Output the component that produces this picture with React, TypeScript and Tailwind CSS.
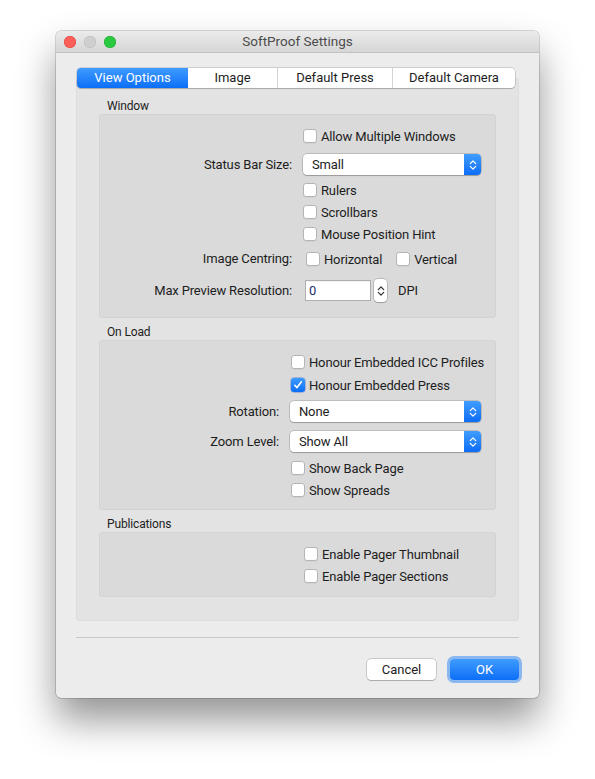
import React from "react";

const font = { fontFamily: "Roboto, 'Liberation Sans', sans-serif" };

function Box({ checked }: { checked?: boolean }) {
  if (checked) {
    return (
      <span className="flex h-[14px] w-[14px] shrink-0 items-center justify-center rounded-[3px] bg-gradient-to-b from-[#3d9bff] to-[#0a6df6] shadow-[0_0_0_0.5px_rgba(0,60,180,0.5)]">
        <svg width="10" height="10" viewBox="0 0 10 10">
          <path d="M1.8 5.3 L4 7.6 L8.4 1.8" fill="none" stroke="white" strokeWidth="1.6" strokeLinecap="round" strokeLinejoin="round" />
        </svg>
      </span>
    );
  }
  return (
    <span className="h-[14px] w-[14px] shrink-0 rounded-[3px] border border-[#b5b5b5] bg-white shadow-[0_1px_0_rgba(0,0,0,0.04)]" />
  );
}

function Check({ label, checked, className = "" }: { label: string; checked?: boolean; className?: string }) {
  return (
    <div className={`flex h-[22px] items-center ${className}`}>
      <Box checked={checked} />
      <span className="ml-[4px] whitespace-nowrap pt-[1px]">{label}</span>
    </div>
  );
}

function Arrows({ color }: { color: string }) {
  return (
    <svg width="8" height="12" viewBox="0 0 8 12">
      <path d="M1.3 4.6 L4 1.9 L6.7 4.6" fill="none" stroke={color} strokeWidth="1.3" strokeLinecap="round" strokeLinejoin="round" />
      <path d="M1.3 7.4 L4 10.1 L6.7 7.4" fill="none" stroke={color} strokeWidth="1.3" strokeLinecap="round" strokeLinejoin="round" />
    </svg>
  );
}

function Popup({ value, width }: { value: string; width: string }) {
  return (
    <div className={`flex h-[21px] ${width} rounded-[4px] bg-white shadow-[0_0_0_0.5px_rgba(0,0,0,0.28),0_1px_1px_rgba(0,0,0,0.18)]`}>
      <span className="flex flex-1 items-center pl-[9px]">{value}</span>
      <span className="flex w-[17px] items-center justify-center rounded-r-[4px] bg-gradient-to-b from-[#3f9dff] to-[#0b6cf5]">
        <Arrows color="white" />
      </span>
    </div>
  );
}

function Row({ label, labelW, children, className = "" }: { label?: string; labelW: string; children: React.ReactNode; className?: string }) {
  return (
    <div className={`flex items-center ${className}`}>
      <span className={`${labelW} shrink-0 text-right whitespace-nowrap`}>{label}</span>
      <div className="ml-[11px] flex items-center">{children}</div>
    </div>
  );
}

function Group({ title, children, className = "" }: { title: string; children: React.ReactNode; className?: string }) {
  return (
    <div className={`flex flex-col ${className}`}>
      <div className="ml-[8px] h-[16px] pt-[1px] text-[12px] leading-[16px] text-[#1e1e1e]">{title}</div>
      <div className="mt-[1px] flex flex-col rounded-[4px] bg-[#dadada] shadow-[inset_0_0_0_1px_#d3d3d3]">{children}</div>
    </div>
  );
}

export default function App() {
  const tabs = [
    { t: "View Options", w: "w-[111px]", sel: true },
    { t: "Image", w: "w-[89px]" },
    { t: "Default Press", w: "w-[115px]" },
    { t: "Default Camera", w: "w-[123px]" },
  ];
  return (
    <div className="min-h-[779px] bg-white pl-[56px] pt-[31px] text-[13px] text-[#1d1d1d]" style={font}>
      <div className="flex h-[667px] w-[483px] flex-col overflow-hidden rounded-[5px] bg-[#ececec] shadow-[0_0_0_0.5px_rgba(0,0,0,0.3),0_22px_38px_rgba(0,0,0,0.42)]">
        {/* title bar */}
        <div className="grid h-[22px] shrink-0 grid-cols-[1fr_auto_1fr] items-center border-b border-[#c2c2c2] bg-gradient-to-b from-[#ebebeb] to-[#d6d6d6]">
          <div className="flex items-center gap-[8px] pl-[8px]">
            <span className="h-[12px] w-[12px] rounded-full bg-[#fc5f57] shadow-[inset_0_0_0_0.5px_#de3f38]" />
            <span className="h-[12px] w-[12px] rounded-full bg-[#cfcfcf] shadow-[inset_0_0_0_0.5px_#b8b8b8]" />
            <span className="h-[12px] w-[12px] rounded-full bg-[#2ac940] shadow-[inset_0_0_0_0.5px_#1ea832]" />
          </div>
          <div className="text-[13.5px] text-[#4c4c4c]">SoftProof Settings</div>
          <div />
        </div>

        <div className="flex flex-col px-[20px] tracking-[-0.15px]">
          {/* tabs */}
          <div className="relative z-10 ml-[1px] mt-[15px] flex h-[20px] self-start rounded-[4px] bg-white tracking-normal shadow-[0_0_0_0.5px_rgba(0,0,0,0.25),0_1px_1px_rgba(0,0,0,0.15)]">
            {tabs.map((tab, i) => (
              <div
                key={tab.t}
                className={`flex ${tab.w} items-center justify-center ${
                  tab.sel
                    ? "rounded-l-[4px] bg-gradient-to-b from-[#3e9bff] to-[#0a6ef7] text-white"
                    : i > 1
                    ? "border-l border-[#d4d4d4]"
                    : ""
                }`}
              >
                {tab.t}
              </div>
            ))}
          </div>

          {/* panel */}
          <div className="-mt-[10px] flex flex-col rounded-[4px] bg-[#e3e3e3] px-[23px] pb-[24px] pt-[19px] shadow-[inset_0_0_0_1px_#dddddd]">
            <Group title="Window">
              <div className="flex flex-col pb-[16px] pt-[11px]">
                <Row labelW="w-[193px]">
                  <Check label="Allow Multiple Windows" />
                </Row>
                <Row label="Status Bar Size:" labelW="w-[193px]" className="mt-[7px]">
                  <Popup value="Small" width="w-[178px]" />
                </Row>
                <Row labelW="w-[193px]" className="mt-[4px]">
                  <Check label="Rulers" />
                </Row>
                <Row labelW="w-[193px]">
                  <Check label="Scrollbars" />
                </Row>
                <Row labelW="w-[193px]">
                  <Check label="Mouse Position Hint" />
                </Row>
                <Row label="Image Centring:" labelW="w-[193px]" className="mt-[3px]">
                  <Check label="Horizontal" className="ml-[3px]" />
                  <Check label="Vertical" className="ml-[14px]" />
                </Row>
                <Row label="Max Preview Resolution:" labelW="w-[193px]" className="mt-[9px]">
                  <span className="ml-[2px] flex h-[21px] w-[66px] items-center border border-[#aeaeae] bg-white pl-[3px] text-[#1c2f6b] shadow-[inset_0_1px_0_rgba(0,0,0,0.05)]">0</span>
                  <span className="ml-[3px] flex h-[23px] w-[13px] items-center justify-center rounded-[4px] bg-white shadow-[0_0_0_0.5px_rgba(0,0,0,0.3),0_1px_1px_rgba(0,0,0,0.15)]">
                    <Arrows color="#333" />
                  </span>
                  <span className="ml-[11px]">DPI</span>
                </Row>
              </div>
            </Group>

            <Group title="On Load" className="mt-[5px]">
              <div className="flex flex-col pb-[9px] pt-[11px]">
                <Row labelW="w-[180px]">
                  <Check label="Honour Embedded ICC Profiles" className="ml-[1px]" />
                </Row>
                <Row labelW="w-[180px]" className="mt-[1px]">
                  <Check label="Honour Embedded Press" checked className="ml-[1px]" />
                </Row>
                <Row label="Rotation:" labelW="w-[180px]" className="mt-[5px]">
                  <Popup value="None" width="w-[191px]" />
                </Row>
                <Row label="Zoom Level:" labelW="w-[180px]" className="mt-[9px]">
                  <Popup value="Show All" width="w-[191px]" />
                </Row>
                <Row labelW="w-[180px]" className="mt-[5px]">
                  <Check label="Show Back Page" className="ml-[1px]" />
                </Row>
                <Row labelW="w-[180px]">
                  <Check label="Show Spreads" className="ml-[1px]" />
                </Row>
              </div>
            </Group>

            <Group title="Publications" className="mt-[5px]">
              <div className="flex flex-col pb-[10px] pt-[11px]">
                <Row labelW="w-[194px]">
                  <Check label="Enable Pager Thumbnail" />
                </Row>
                <Row labelW="w-[194px]">
                  <Check label="Enable Pager Sections" />
                </Row>
              </div>
            </Group>
          </div>

          <div className="mt-[16px] h-px bg-[#c8c8c8]" />

          <div className="mt-[21px] flex justify-end gap-[14px] tracking-normal">
            <button className="flex h-[21px] w-[69px] items-center justify-center rounded-[4px] bg-white shadow-[0_0_0_0.5px_rgba(0,0,0,0.3),0_1px_1px_rgba(0,0,0,0.15)]">
              Cancel
            </button>
            <button className="flex h-[21px] w-[69px] items-center justify-center rounded-[4px] bg-gradient-to-b from-[#3e9bff] to-[#0a6ef7] text-white shadow-[0_0_0_3px_rgba(60,140,245,0.55)]">
              OK
            </button>
          </div>
        </div>
      </div>
    </div>
  );
}
